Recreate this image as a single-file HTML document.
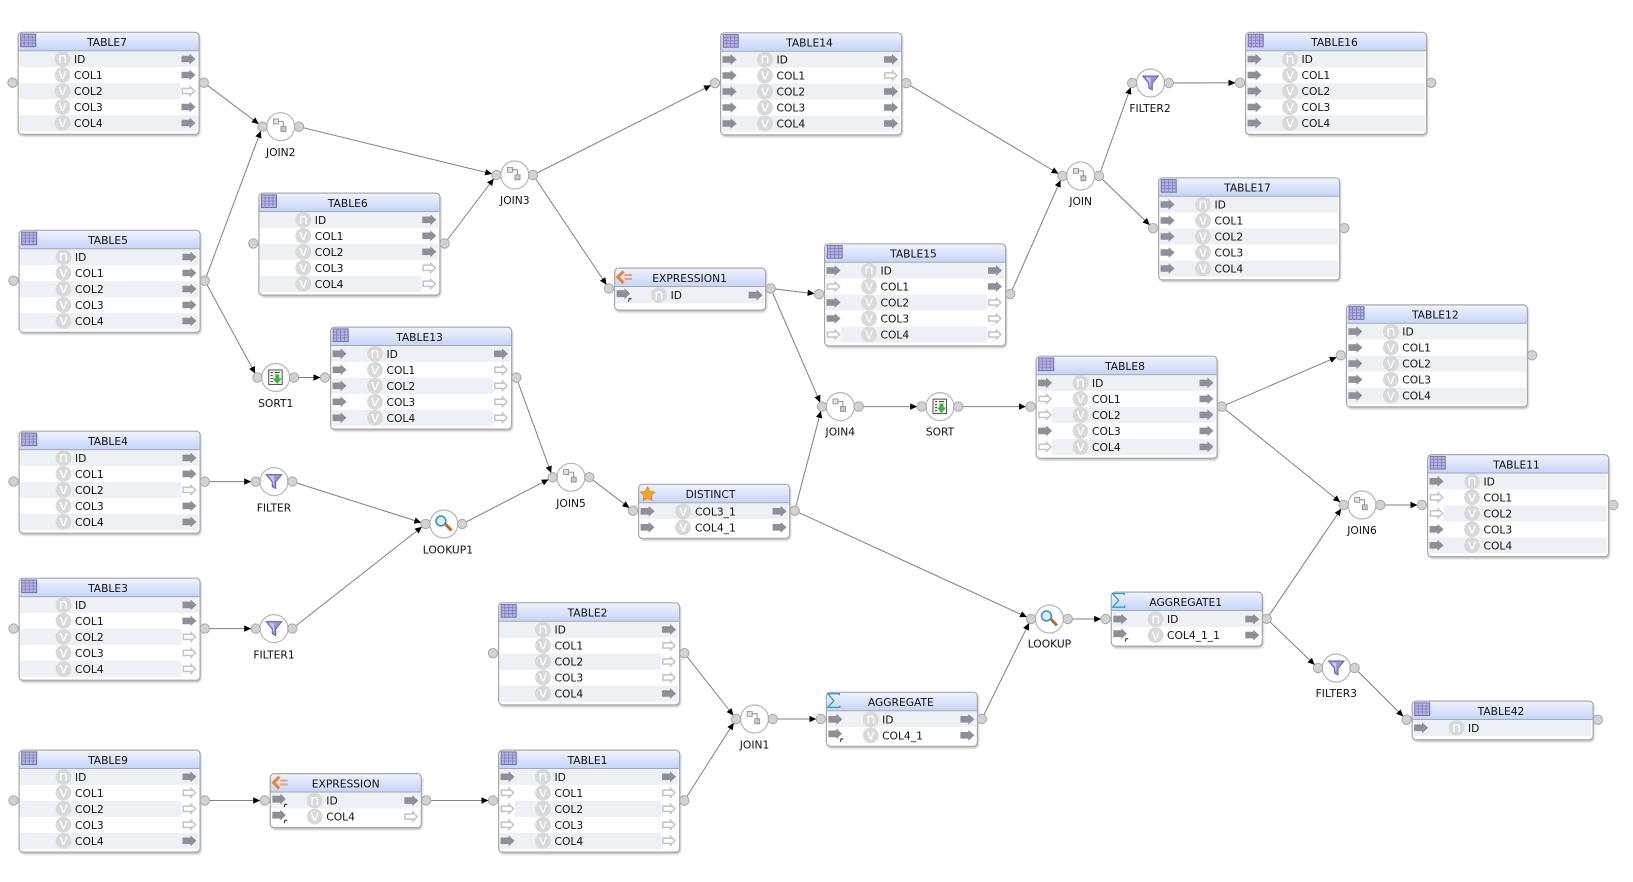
<!DOCTYPE html>
<html><head><meta charset="utf-8"><title>Diagram</title>
<style>
html,body{margin:0;padding:0;background:#fff;width:1633px;height:882px;overflow:hidden}
svg{display:block}
text{font-family:"DejaVu Sans","Liberation Sans",sans-serif;font-size:10.7px;fill:#111}
.h{text-anchor:middle}
.l{text-anchor:middle}
.b{text-anchor:middle;fill:#fff;font-size:14.5px}
.c path{fill:none;stroke:#808080;stroke-width:1;marker-end:url(#m)}
.n{fill:#fff;stroke:#b6b6b6;stroke-width:1.2}
</style></head><body>
<svg xmlns="http://www.w3.org/2000/svg" width="1633" height="882" viewBox="0 0 1633 882">
<defs>
<linearGradient id="g" x1="0" y1="0" x2="0" y2="1"><stop offset="0" stop-color="#f1f4fc"/><stop offset="1" stop-color="#c5d4fa"/></linearGradient>
<marker id="m" markerUnits="userSpaceOnUse" viewBox="0 -4 12 8" markerWidth="12" markerHeight="8" refX="11.5" refY="0" orient="auto"><path d="M0-3.2L7 0L0 3.2Z" fill="#000" stroke="none"/></marker>
<g id="p"><circle r="4.7" fill="#d2d2d2" stroke="#a8a8a8"/></g>
<g id="s"><path d="M0-3.3H8V-5.4L14 0L8 5.4V3.3H0Z" fill="#8f8f99"/></g>
<g id="hr"><rect x="-1" y="-8" width="17" height="16" fill="#fff"/><path d="M.8-2.6H8.5V-4.4L13 0L8.5 4.4V2.6H.8Z" fill="#fff" stroke="#c6c6cc" stroke-width="1.6"/></g>
<g id="hl"><rect x="-1" y="-8" width="15" height="16" fill="#fff"/><path d="M.8-2.6H8.5V-4.4L13 0L8.5 4.4V2.6H.8Z" fill="#fff" stroke="#c6c6cc" stroke-width="1.6"/></g>
<g id="f"><path d="M0-4.8H8V-7L13.5-1.5L8 4V2H0Z" fill="#8f8f99"/><path d="M12 6.5L12.6 3.6H15" fill="none" stroke="#222" stroke-width="1"/></g>
<g id="it"><rect x="3.2" y="2.4" width="15" height="12.6" fill="#b9b5e2" stroke="#6f6fae"/><path d="M3.2 5.5H18.2M3.2 8.5H18.2M3.2 11.5H18.2M6.7 2.4V15M10.7 2.4V15M14.7 2.4V15" stroke="#7e7ebc" stroke-width=".8" fill="none"/></g>
<g id="ie"><path d="M9.5 3.8L3.8 9.6L9.5 15.4" fill="none" stroke="#ec8239" stroke-width="3"/><path d="M10.5 7.5H18M10.5 11.5H18" stroke="#f0a070" stroke-width="2"/></g>
<g id="ia"><path d="M13.6 3.5V2H2L8 9L2 15.7H14V14" fill="none" stroke="#2b9fd1" stroke-width="1.3"/></g>
<g id="id"><path d="M9.6 3L11.8 7.7L16.8 8.4L13.2 11.8L14.1 16.8L9.6 14.4L5.1 16.8L6 11.8L2.4 8.4L7.4 7.7Z" fill="#f8a91f" stroke="#d98a18" stroke-width=".8"/></g>
<g id="sh"><rect x="1.5" y="19.4" width="178.3" height="16" fill="#edf0f4"/></g>
<g id="T"><rect x=".6" y=".6" width="181" height="102" rx="4" fill="#fff" style="filter:drop-shadow(1.5px 2px 1px rgba(0,0,0,.28))"/><path d="M.6 19V4.6a4 4 0 0 1 4-4H177.6a4 4 0 0 1 4 4V19Z" fill="url(#g)"/><use href="#sh"/><use href="#sh" y="32"/><use href="#sh" y="64"/><path d="M.6 19H181.6" stroke="#a9a9a9"/><rect x=".6" y=".6" width="181" height="102" rx="4" fill="none" stroke="#a9a9a9" stroke-width="1.2"/><g fill="#d9d9d9"><circle cx="45" cy="27.3" r="7.9"/><circle cx="45" cy="43.3" r="7.9"/><circle cx="45" cy="59.3" r="7.9"/><circle cx="45" cy="75.3" r="7.9"/><circle cx="45" cy="91.3" r="7.9"/></g><use href="#it"/></g>
<g id="T1"><rect x=".6" y=".6" width="181" height="38.6" rx="4" fill="#fff" style="filter:drop-shadow(1.5px 2px 1px rgba(0,0,0,.28))"/><path d="M.6 19V4.6a4 4 0 0 1 4-4H177.6a4 4 0 0 1 4 4V19Z" fill="url(#g)"/><use href="#sh"/><path d="M.6 19H181.6" stroke="#a9a9a9"/><rect x=".6" y=".6" width="181" height="38.6" rx="4" fill="none" stroke="#a9a9a9" stroke-width="1.2"/><circle cx="45" cy="27.3" r="7.9" fill="#d9d9d9"/><use href="#it"/></g>
<g id="C"><rect x=".6" y=".6" width="151" height="54" rx="4" fill="#fff" style="filter:drop-shadow(1.5px 2px 1px rgba(0,0,0,.28))"/><path d="M.6 19V4.6a4 4 0 0 1 4-4H147.6a4 4 0 0 1 4 4V19Z" fill="url(#g)"/><rect x="1.5" y="19.4" width="148.5" height="16" fill="#edf0f4"/><path d="M.6 19H151.6" stroke="#a9a9a9"/><rect x=".6" y=".6" width="151" height="54" rx="4" fill="none" stroke="#a9a9a9" stroke-width="1.2"/><circle cx="45" cy="27.6" r="7.9" fill="#d9d9d9"/><circle cx="45" cy="43.6" r="7.9" fill="#d9d9d9"/></g>
<g id="E"><rect x=".6" y=".6" width="151" height="42" rx="4" fill="#fff" style="filter:drop-shadow(1.5px 2px 1px rgba(0,0,0,.28))"/><path d="M.6 19V4.6a4 4 0 0 1 4-4H147.6a4 4 0 0 1 4 4V19Z" fill="url(#g)"/><rect x="1.5" y="19.4" width="148.5" height="16.5" fill="#edf0f4"/><path d="M.6 19H151.6" stroke="#a9a9a9"/><rect x=".6" y=".6" width="151" height="42" rx="4" fill="none" stroke="#a9a9a9" stroke-width="1.2"/><circle cx="45" cy="27.6" r="7.9" fill="#d9d9d9"/></g>
<g id="N"><circle r="14" class="n"/><use href="#p" x="-18.3"/><use href="#p" x="18.3"/></g>
<g id="ij"><path d="M-2.2-5.2H2.6V-.2" fill="none" stroke="#777" stroke-width=".8"/><rect x="-7.3" y="-7.7" width="5" height="5" fill="#e2e2e2" stroke="#888" stroke-width=".8"/><rect x=".2" y="-.2" width="5" height="5" fill="#c8c8c8" stroke="#888" stroke-width=".8"/></g>
<g id="if"><path d="M-7.8-7H7.8L1.8 .4V7L-1.8 5V.4Z" fill="#9696d2" stroke="#5c5ca0" stroke-width=".9"/><path d="M-5-5.5H0V3L-1 3V0Z" fill="#c9c9ee"/></g>
<g id="is"><rect x="-7" y="-7.5" width="13.5" height="14.5" fill="#eef2ea" stroke="#555" stroke-width="1"/><path d="M-5-5H-3M-5-2H-3M-5 1H-3M-5 4H-3M-1-5H4" stroke="#444" stroke-width="1" fill="none"/><path d="M-.5-3H3.5V1H6L1.5 6.5L-3 1H-.5Z" fill="#3fb04a"/></g>
<g id="il"><path d="M1-.5L7.5 6.5" stroke="#b5701c" stroke-width="3" fill="none"/><circle cx="-3" cy="-3" r="4.9" fill="#d8eefb" stroke="#3f8fd6" stroke-width="1.6"/></g>
</defs>
<rect width="1633" height="882" fill="#fff"/>

<g class="c">
<path d="M203.8 82.7L262.4 126.7"/>
<path d="M204.8 280.7L262.4 126.7"/>
<path d="M204.8 280.7L257.4 377.5"/>
<path d="M299 126.7L496.5 175"/>
<path d="M444.6 243.5L496.5 175"/>
<path d="M533.1 175L715 83.2"/>
<path d="M533.1 175L609 288.5"/>
<path d="M906.3 83.2L1062.4 176"/>
<path d="M1010.3 294.2L1062.4 176"/>
<path d="M770.7 288.5L819 294.2"/>
<path d="M770.7 288.5L822 406.6"/>
<path d="M1099 176L1132.2 83"/>
<path d="M1099 176L1153 228.2"/>
<path d="M1168.8 83L1240 82.8"/>
<path d="M294 377.5L325 377.5"/>
<path d="M516.3 377.5L552.7 477.3"/>
<path d="M204.8 481.6L255.7 481.6"/>
<path d="M204.8 628.6L255.7 628.6"/>
<path d="M292.3 481.6L425.6 524"/>
<path d="M292.3 628.6L425.6 524"/>
<path d="M462.2 524L552.7 477.3"/>
<path d="M589.3 477.3L633 510.7"/>
<path d="M794.7 510.7L822 406.6"/>
<path d="M794.7 510.7L1031.1 619"/>
<path d="M858.6 406.6L921.7 406.6"/>
<path d="M958.3 406.6L1030.5 406.6"/>
<path d="M1221.8 406.6L1340.8 355.3"/>
<path d="M1221.8 406.6L1343.7 505"/>
<path d="M1380.3 505L1422 505"/>
<path d="M1266.7 618.8L1343.7 505"/>
<path d="M1266.7 618.8L1318 668"/>
<path d="M1354.6 668L1406.5 719.7"/>
<path d="M1067.7 619L1105.7 619"/>
<path d="M684.3 653.2L736.2 719"/>
<path d="M684.3 800.5L736.2 719"/>
<path d="M772.8 719L820.8 719"/>
<path d="M981.8 719L1031.1 619"/>
<path d="M204.8 800.5L264.7 800.5"/>
<path d="M426.3 800.5L493 800.5"/>
</g>

<g transform="translate(17.5,31.7)"><use href="#T"/><use href="#p" x="-5" y="51"/><use href="#p" x="186.3" y="51"/><text class="h" x="89.5" y="14.4">TABLE7</text><use href="#s" x="164" y="27.3"/><use href="#s" x="164" y="43.3"/><use href="#hr" x="164" y="59.3"/><use href="#s" x="164" y="75.3"/><use href="#s" x="164" y="91.3"/><text class="b"><tspan x="45" y="31.5">n</tspan><tspan x="45" y="47.5">v</tspan><tspan x="45" y="63.5">v</tspan><tspan x="45" y="79.5">v</tspan><tspan x="45" y="95.5">v</tspan></text><text><tspan x="56.5" y="31.3">ID</tspan><tspan x="56.5" y="47.3">COL1</tspan><tspan x="56.5" y="63.3">COL2</tspan><tspan x="56.5" y="79.3">COL3</tspan><tspan x="56.5" y="95.3">COL4</tspan></text></g>

<g transform="translate(18.5,229.7)"><use href="#T"/><use href="#p" x="-5" y="51"/><use href="#p" x="186.3" y="51"/><text class="h" x="89.5" y="14.4">TABLE5</text><use href="#s" x="164" y="27.3"/><use href="#s" x="164" y="43.3"/><use href="#s" x="164" y="59.3"/><use href="#s" x="164" y="75.3"/><use href="#s" x="164" y="91.3"/><text class="b"><tspan x="45" y="31.5">n</tspan><tspan x="45" y="47.5">v</tspan><tspan x="45" y="63.5">v</tspan><tspan x="45" y="79.5">v</tspan><tspan x="45" y="95.5">v</tspan></text><text><tspan x="56.5" y="31.3">ID</tspan><tspan x="56.5" y="47.3">COL1</tspan><tspan x="56.5" y="63.3">COL2</tspan><tspan x="56.5" y="79.3">COL3</tspan><tspan x="56.5" y="95.3">COL4</tspan></text></g>

<g transform="translate(258.3,192.5)"><use href="#T"/><use href="#p" x="-5" y="51"/><use href="#p" x="186.3" y="51"/><text class="h" x="89.5" y="14.4">TABLE6</text><use href="#s" x="164" y="27.3"/><use href="#s" x="164" y="43.3"/><use href="#s" x="164" y="59.3"/><use href="#hr" x="164" y="75.3"/><use href="#hr" x="164" y="91.3"/><text class="b"><tspan x="45" y="31.5">n</tspan><tspan x="45" y="47.5">v</tspan><tspan x="45" y="63.5">v</tspan><tspan x="45" y="79.5">v</tspan><tspan x="45" y="95.5">v</tspan></text><text><tspan x="56.5" y="31.3">ID</tspan><tspan x="56.5" y="47.3">COL1</tspan><tspan x="56.5" y="63.3">COL2</tspan><tspan x="56.5" y="79.3">COL3</tspan><tspan x="56.5" y="95.3">COL4</tspan></text></g>

<g transform="translate(330,326.5)"><use href="#T"/><use href="#p" x="-5" y="51"/><use href="#p" x="186.3" y="51"/><text class="h" x="89.5" y="14.4">TABLE13</text><use href="#s" x="2.6" y="27.3"/><use href="#s" x="2.6" y="43.3"/><use href="#s" x="2.6" y="59.3"/><use href="#s" x="2.6" y="75.3"/><use href="#s" x="2.6" y="91.3"/><use href="#s" x="164" y="27.3"/><use href="#hr" x="164" y="43.3"/><use href="#hr" x="164" y="59.3"/><use href="#hr" x="164" y="75.3"/><use href="#hr" x="164" y="91.3"/><text class="b"><tspan x="45" y="31.5">n</tspan><tspan x="45" y="47.5">v</tspan><tspan x="45" y="63.5">v</tspan><tspan x="45" y="79.5">v</tspan><tspan x="45" y="95.5">v</tspan></text><text><tspan x="56.5" y="31.3">ID</tspan><tspan x="56.5" y="47.3">COL1</tspan><tspan x="56.5" y="63.3">COL2</tspan><tspan x="56.5" y="79.3">COL3</tspan><tspan x="56.5" y="95.3">COL4</tspan></text></g>

<g transform="translate(18.5,430.6)"><use href="#T"/><use href="#p" x="-5" y="51"/><use href="#p" x="186.3" y="51"/><text class="h" x="89.5" y="14.4">TABLE4</text><use href="#s" x="164" y="27.3"/><use href="#s" x="164" y="43.3"/><use href="#hr" x="164" y="59.3"/><use href="#s" x="164" y="75.3"/><use href="#s" x="164" y="91.3"/><text class="b"><tspan x="45" y="31.5">n</tspan><tspan x="45" y="47.5">v</tspan><tspan x="45" y="63.5">v</tspan><tspan x="45" y="79.5">v</tspan><tspan x="45" y="95.5">v</tspan></text><text><tspan x="56.5" y="31.3">ID</tspan><tspan x="56.5" y="47.3">COL1</tspan><tspan x="56.5" y="63.3">COL2</tspan><tspan x="56.5" y="79.3">COL3</tspan><tspan x="56.5" y="95.3">COL4</tspan></text></g>

<g transform="translate(18.5,577.6)"><use href="#T"/><use href="#p" x="-5" y="51"/><use href="#p" x="186.3" y="51"/><text class="h" x="89.5" y="14.4">TABLE3</text><use href="#s" x="164" y="27.3"/><use href="#s" x="164" y="43.3"/><use href="#hr" x="164" y="59.3"/><use href="#hr" x="164" y="75.3"/><use href="#hr" x="164" y="91.3"/><text class="b"><tspan x="45" y="31.5">n</tspan><tspan x="45" y="47.5">v</tspan><tspan x="45" y="63.5">v</tspan><tspan x="45" y="79.5">v</tspan><tspan x="45" y="95.5">v</tspan></text><text><tspan x="56.5" y="31.3">ID</tspan><tspan x="56.5" y="47.3">COL1</tspan><tspan x="56.5" y="63.3">COL2</tspan><tspan x="56.5" y="79.3">COL3</tspan><tspan x="56.5" y="95.3">COL4</tspan></text></g>

<g transform="translate(18.5,749.5)"><use href="#T"/><use href="#p" x="-5" y="51"/><use href="#p" x="186.3" y="51"/><text class="h" x="89.5" y="14.4">TABLE9</text><use href="#s" x="164" y="27.3"/><use href="#hr" x="164" y="43.3"/><use href="#hr" x="164" y="59.3"/><use href="#hr" x="164" y="75.3"/><use href="#s" x="164" y="91.3"/><text class="b"><tspan x="45" y="31.5">n</tspan><tspan x="45" y="47.5">v</tspan><tspan x="45" y="63.5">v</tspan><tspan x="45" y="79.5">v</tspan><tspan x="45" y="95.5">v</tspan></text><text><tspan x="56.5" y="31.3">ID</tspan><tspan x="56.5" y="47.3">COL1</tspan><tspan x="56.5" y="63.3">COL2</tspan><tspan x="56.5" y="79.3">COL3</tspan><tspan x="56.5" y="95.3">COL4</tspan></text></g>

<g transform="translate(498,602.2)"><use href="#T"/><use href="#p" x="-5" y="51"/><use href="#p" x="186.3" y="51"/><text class="h" x="89.5" y="14.4">TABLE2</text><use href="#s" x="164" y="27.3"/><use href="#hr" x="164" y="43.3"/><use href="#hr" x="164" y="59.3"/><use href="#hr" x="164" y="75.3"/><use href="#s" x="164" y="91.3"/><text class="b"><tspan x="45" y="31.5">n</tspan><tspan x="45" y="47.5">v</tspan><tspan x="45" y="63.5">v</tspan><tspan x="45" y="79.5">v</tspan><tspan x="45" y="95.5">v</tspan></text><text><tspan x="56.5" y="31.3">ID</tspan><tspan x="56.5" y="47.3">COL1</tspan><tspan x="56.5" y="63.3">COL2</tspan><tspan x="56.5" y="79.3">COL3</tspan><tspan x="56.5" y="95.3">COL4</tspan></text></g>

<g transform="translate(498,749.5)"><use href="#T"/><use href="#p" x="-5" y="51"/><use href="#p" x="186.3" y="51"/><text class="h" x="89.5" y="14.4">TABLE1</text><use href="#s" x="2.6" y="27.3"/><use href="#hl" x="2.6" y="43.3"/><use href="#hl" x="2.6" y="59.3"/><use href="#hl" x="2.6" y="75.3"/><use href="#s" x="2.6" y="91.3"/><use href="#s" x="164" y="27.3"/><use href="#hr" x="164" y="43.3"/><use href="#hr" x="164" y="59.3"/><use href="#hr" x="164" y="75.3"/><use href="#hr" x="164" y="91.3"/><text class="b"><tspan x="45" y="31.5">n</tspan><tspan x="45" y="47.5">v</tspan><tspan x="45" y="63.5">v</tspan><tspan x="45" y="79.5">v</tspan><tspan x="45" y="95.5">v</tspan></text><text><tspan x="56.5" y="31.3">ID</tspan><tspan x="56.5" y="47.3">COL1</tspan><tspan x="56.5" y="63.3">COL2</tspan><tspan x="56.5" y="79.3">COL3</tspan><tspan x="56.5" y="95.3">COL4</tspan></text></g>

<g transform="translate(720,32.2)"><use href="#T"/><use href="#p" x="-5" y="51"/><use href="#p" x="186.3" y="51"/><text class="h" x="89.5" y="14.4">TABLE14</text><use href="#s" x="2.6" y="27.3"/><use href="#s" x="2.6" y="43.3"/><use href="#s" x="2.6" y="59.3"/><use href="#s" x="2.6" y="75.3"/><use href="#s" x="2.6" y="91.3"/><use href="#s" x="164" y="27.3"/><use href="#hr" x="164" y="43.3"/><use href="#s" x="164" y="59.3"/><use href="#s" x="164" y="75.3"/><use href="#s" x="164" y="91.3"/><text class="b"><tspan x="45" y="31.5">n</tspan><tspan x="45" y="47.5">v</tspan><tspan x="45" y="63.5">v</tspan><tspan x="45" y="79.5">v</tspan><tspan x="45" y="95.5">v</tspan></text><text><tspan x="56.5" y="31.3">ID</tspan><tspan x="56.5" y="47.3">COL1</tspan><tspan x="56.5" y="63.3">COL2</tspan><tspan x="56.5" y="79.3">COL3</tspan><tspan x="56.5" y="95.3">COL4</tspan></text></g>

<g transform="translate(824,243.2)"><use href="#T"/><use href="#p" x="-5" y="51"/><use href="#p" x="186.3" y="51"/><text class="h" x="89.5" y="14.4">TABLE15</text><use href="#s" x="2.6" y="27.3"/><use href="#hl" x="2.6" y="43.3"/><use href="#s" x="2.6" y="59.3"/><use href="#s" x="2.6" y="75.3"/><use href="#hl" x="2.6" y="91.3"/><use href="#s" x="164" y="27.3"/><use href="#s" x="164" y="43.3"/><use href="#hr" x="164" y="59.3"/><use href="#hr" x="164" y="75.3"/><use href="#hr" x="164" y="91.3"/><text class="b"><tspan x="45" y="31.5">n</tspan><tspan x="45" y="47.5">v</tspan><tspan x="45" y="63.5">v</tspan><tspan x="45" y="79.5">v</tspan><tspan x="45" y="95.5">v</tspan></text><text><tspan x="56.5" y="31.3">ID</tspan><tspan x="56.5" y="47.3">COL1</tspan><tspan x="56.5" y="63.3">COL2</tspan><tspan x="56.5" y="79.3">COL3</tspan><tspan x="56.5" y="95.3">COL4</tspan></text></g>

<g transform="translate(1035.5,355.6)"><use href="#T"/><use href="#p" x="-5" y="51"/><use href="#p" x="186.3" y="51"/><text class="h" x="89.5" y="14.4">TABLE8</text><use href="#s" x="2.6" y="27.3"/><use href="#hl" x="2.6" y="43.3"/><use href="#hl" x="2.6" y="59.3"/><use href="#s" x="2.6" y="75.3"/><use href="#hl" x="2.6" y="91.3"/><use href="#s" x="164" y="27.3"/><use href="#s" x="164" y="43.3"/><use href="#s" x="164" y="59.3"/><use href="#s" x="164" y="75.3"/><use href="#s" x="164" y="91.3"/><text class="b"><tspan x="45" y="31.5">n</tspan><tspan x="45" y="47.5">v</tspan><tspan x="45" y="63.5">v</tspan><tspan x="45" y="79.5">v</tspan><tspan x="45" y="95.5">v</tspan></text><text><tspan x="56.5" y="31.3">ID</tspan><tspan x="56.5" y="47.3">COL1</tspan><tspan x="56.5" y="63.3">COL2</tspan><tspan x="56.5" y="79.3">COL3</tspan><tspan x="56.5" y="95.3">COL4</tspan></text></g>

<g transform="translate(1245,31.8)"><use href="#T"/><use href="#p" x="-5" y="51"/><use href="#p" x="186.3" y="51"/><text class="h" x="89.5" y="14.4">TABLE16</text><use href="#s" x="2.6" y="27.3"/><use href="#s" x="2.6" y="43.3"/><use href="#s" x="2.6" y="59.3"/><use href="#s" x="2.6" y="75.3"/><use href="#s" x="2.6" y="91.3"/><text class="b"><tspan x="45" y="31.5">n</tspan><tspan x="45" y="47.5">v</tspan><tspan x="45" y="63.5">v</tspan><tspan x="45" y="79.5">v</tspan><tspan x="45" y="95.5">v</tspan></text><text><tspan x="56.5" y="31.3">ID</tspan><tspan x="56.5" y="47.3">COL1</tspan><tspan x="56.5" y="63.3">COL2</tspan><tspan x="56.5" y="79.3">COL3</tspan><tspan x="56.5" y="95.3">COL4</tspan></text></g>

<g transform="translate(1158,177.2)"><use href="#T"/><use href="#p" x="-5" y="51"/><use href="#p" x="186.3" y="51"/><text class="h" x="89.5" y="14.4">TABLE17</text><use href="#s" x="2.6" y="27.3"/><use href="#s" x="2.6" y="43.3"/><use href="#s" x="2.6" y="59.3"/><use href="#s" x="2.6" y="75.3"/><use href="#s" x="2.6" y="91.3"/><text class="b"><tspan x="45" y="31.5">n</tspan><tspan x="45" y="47.5">v</tspan><tspan x="45" y="63.5">v</tspan><tspan x="45" y="79.5">v</tspan><tspan x="45" y="95.5">v</tspan></text><text><tspan x="56.5" y="31.3">ID</tspan><tspan x="56.5" y="47.3">COL1</tspan><tspan x="56.5" y="63.3">COL2</tspan><tspan x="56.5" y="79.3">COL3</tspan><tspan x="56.5" y="95.3">COL4</tspan></text></g>

<g transform="translate(1345.8,304.3)"><use href="#T"/><use href="#p" x="-5" y="51"/><use href="#p" x="186.3" y="51"/><text class="h" x="89.5" y="14.4">TABLE12</text><use href="#s" x="2.6" y="27.3"/><use href="#s" x="2.6" y="43.3"/><use href="#s" x="2.6" y="59.3"/><use href="#s" x="2.6" y="75.3"/><use href="#s" x="2.6" y="91.3"/><text class="b"><tspan x="45" y="31.5">n</tspan><tspan x="45" y="47.5">v</tspan><tspan x="45" y="63.5">v</tspan><tspan x="45" y="79.5">v</tspan><tspan x="45" y="95.5">v</tspan></text><text><tspan x="56.5" y="31.3">ID</tspan><tspan x="56.5" y="47.3">COL1</tspan><tspan x="56.5" y="63.3">COL2</tspan><tspan x="56.5" y="79.3">COL3</tspan><tspan x="56.5" y="95.3">COL4</tspan></text></g>

<g transform="translate(1427,454)"><use href="#T"/><use href="#p" x="-5" y="51"/><use href="#p" x="186.3" y="51"/><text class="h" x="89.5" y="14.4">TABLE11</text><use href="#s" x="2.6" y="27.3"/><use href="#hl" x="2.6" y="43.3"/><use href="#hl" x="2.6" y="59.3"/><use href="#s" x="2.6" y="75.3"/><use href="#s" x="2.6" y="91.3"/><text class="b"><tspan x="45" y="31.5">n</tspan><tspan x="45" y="47.5">v</tspan><tspan x="45" y="63.5">v</tspan><tspan x="45" y="79.5">v</tspan><tspan x="45" y="95.5">v</tspan></text><text><tspan x="56.5" y="31.3">ID</tspan><tspan x="56.5" y="47.3">COL1</tspan><tspan x="56.5" y="63.3">COL2</tspan><tspan x="56.5" y="79.3">COL3</tspan><tspan x="56.5" y="95.3">COL4</tspan></text></g>

<g transform="translate(1411.5,700.5)"><use href="#T1"/><use href="#p" x="-5" y="19.2"/><use href="#p" x="186.3" y="19.2"/><text class="h" x="89.5" y="14.4">TABLE42</text><use href="#s" x="2.6" y="27.3"/><text class="b" x="45" y="31.5">n</text><text x="56.5" y="31.3">ID</text></g>

<g transform="translate(614,267.5)"><use href="#E"/><use href="#ie"/><use href="#p" x="-5" y="21"/><use href="#p" x="156.7" y="21"/><text class="h" x="75.6" y="14.4">EXPRESSION1</text><use href="#f" x="2.6" y="27.6"/><use href="#s" x="134.6" y="27.6"/><text class="b" x="45" y="31.8">n</text><text x="56.6" y="31.6">ID</text></g>

<g transform="translate(269.7,773)"><use href="#C"/><use href="#ie"/><use href="#p" x="-5" y="27.5"/><use href="#p" x="156.6" y="27.5"/><text class="h" x="76" y="14.4">EXPRESSION</text><use href="#f" x="2.6" y="27.6"/><use href="#f" x="2.6" y="43.6"/><use href="#s" x="134.6" y="27.6"/><use href="#hr" x="134.6" y="43.6"/><text class="b"><tspan x="45" y="31.8">n</tspan><tspan x="45" y="47.8">v</tspan></text><text><tspan x="56.6" y="31.6">ID</tspan><tspan x="56.6" y="47.6">COL4</tspan></text></g>

<g transform="translate(638,483.7)"><use href="#C"/><use href="#id"/><use href="#p" x="-5" y="27"/><use href="#p" x="156.7" y="27"/><text class="h" x="72.5" y="14.4">DISTINCT</text><use href="#s" x="2.6" y="27.6"/><use href="#s" x="2.6" y="43.6"/><use href="#s" x="134.6" y="27.6"/><use href="#s" x="134.6" y="43.6"/><text class="b"><tspan x="45.3" y="31.8">v</tspan><tspan x="45.3" y="47.8">v</tspan></text><text><tspan x="57" y="31.6">COL3_1</tspan><tspan x="57" y="47.6">COL4_1</tspan></text></g>

<g transform="translate(1110.7,591.5)"><use href="#C"/><use href="#ia"/><use href="#p" x="-5" y="27.5"/><use href="#p" x="156" y="27.3"/><text class="h" x="75" y="14.4">AGGREGATE1</text><use href="#s" x="2.6" y="27.6"/><use href="#f" x="2.6" y="43.6"/><use href="#s" x="134.6" y="27.6"/><use href="#s" x="134.6" y="43.6"/><text class="b"><tspan x="45" y="31.8">n</tspan><tspan x="45" y="47.8">v</tspan></text><text><tspan x="56.3" y="31.6">ID</tspan><tspan x="56.3" y="47.6">COL4_1_1</tspan></text></g>

<g transform="translate(825.8,691.7)"><use href="#C"/><use href="#ia"/><use href="#p" x="-5" y="27.3"/><use href="#p" x="156" y="27.3"/><text class="h" x="75" y="14.4">AGGREGATE</text><use href="#s" x="2.6" y="27.6"/><use href="#f" x="2.6" y="43.6"/><use href="#s" x="134.6" y="27.6"/><use href="#s" x="134.6" y="43.6"/><text class="b"><tspan x="45" y="31.8">n</tspan><tspan x="45" y="47.8">v</tspan></text><text><tspan x="56.3" y="31.6">ID</tspan><tspan x="56.3" y="47.6">COL4_1</tspan></text></g>

<g transform="translate(280.7,126.7)"><use href="#N"/><use href="#ij"/><text class="l" y="29.5">JOIN2</text></g>
<g transform="translate(514.8,175)"><use href="#N"/><use href="#ij"/><text class="l" y="29">JOIN3</text></g>
<g transform="translate(1080.7,176)"><use href="#N"/><use href="#ij"/><text class="l" y="29">JOIN</text></g>
<g transform="translate(840.3,406.6)"><use href="#N"/><use href="#ij"/><text class="l" y="29">JOIN4</text></g>
<g transform="translate(571,477.3)"><use href="#N"/><use href="#ij"/><text class="l" y="29.5">JOIN5</text></g>
<g transform="translate(754.5,719)"><use href="#N"/><use href="#ij"/><text class="l" y="29.5">JOIN1</text></g>
<g transform="translate(1362,505)"><use href="#N"/><use href="#ij"/><text class="l" y="29">JOIN6</text></g>
<g transform="translate(1150.5,83)"><use href="#N"/><use href="#if"/><text class="l" x="-.5" y="29">FILTER2</text></g>
<g transform="translate(274,481.6)"><use href="#N"/><use href="#if"/><text class="l" y="30">FILTER</text></g>
<g transform="translate(274,628.6)"><use href="#N"/><use href="#if"/><text class="l" y="30">FILTER1</text></g>
<g transform="translate(1336.3,668)"><use href="#N"/><use href="#if"/><text class="l" y="29">FILTER3</text></g>
<g transform="translate(275.7,377.5)"><use href="#N"/><use href="#is"/><text class="l" y="29.5">SORT1</text></g>
<g transform="translate(940,406.6)"><use href="#N"/><use href="#is"/><text class="l" y="29">SORT</text></g>
<g transform="translate(443.9,524)"><use href="#N"/><use href="#il"/><text class="l" x="4" y="29.5">LOOKUP1</text></g>
<g transform="translate(1049.4,619)"><use href="#N"/><use href="#il"/><text class="l" y="28.5">LOOKUP</text></g>
</svg>
</body></html>
